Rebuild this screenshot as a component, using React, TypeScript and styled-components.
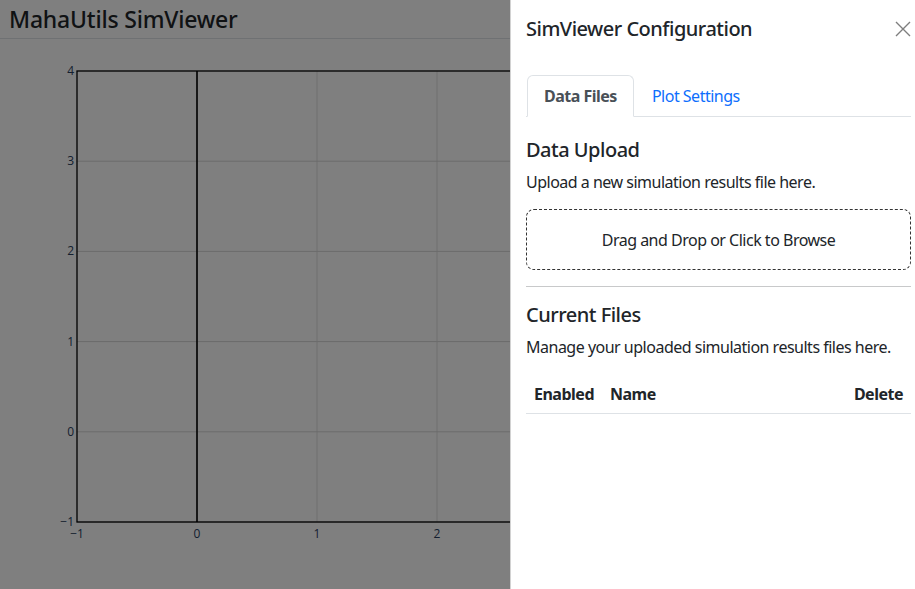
import * as React from 'react';
import styled, { createGlobalStyle } from 'styled-components';

const GlobalStyle = createGlobalStyle`
  html, body {
    margin: 0;
    padding: 0;
    background: #fff;
    overflow: hidden;
  }
  body {
    font-family: "Noto Sans", "Open Sans", sans-serif;
    font-size: 16px;
    line-height: 1.5;
    color: #212529;
  }
  * { box-sizing: border-box; }
`;

const Page = styled.div`
  display: flex;
  flex-direction: column;
  width: 915px;
  height: 589px;
`;

const PageHeader = styled.div`
  padding: 5px 9px 5px;
  border-bottom: 1px solid #dee2e6;
  font-size: 23px;
  font-weight: 500;
  line-height: 28px;
  letter-spacing: -0.2px;
`;

const PlotArea = styled.div`
  flex: 1;
`;

const Backdrop = styled.div`
  position: fixed;
  inset: 0;
  background: rgba(0, 0, 0, 0.5);
`;

const Panel = styled.aside`
  position: fixed;
  top: 0;
  right: 0;
  bottom: 0;
  width: 405px;
  background: #fff;
  border-left: 1px solid rgba(0, 0, 0, 0.175);
  display: flex;
  flex-direction: column;
  letter-spacing: -0.5px;
`;

const PanelHeader = styled.div`
  display: flex;
  align-items: center;
  justify-content: space-between;
  padding: 17px 4px 16px 15px;
`;

const PanelTitle = styled.h5`
  margin: 0;
  font-size: 20px;
  font-weight: 500;
  line-height: 24px;
`;

const CloseButton = styled.button`
  width: 16px;
  height: 16px;
  padding: 0;
  border: 0;
  background: transparent;
  opacity: 0.5;
  display: flex;
  cursor: pointer;
`;

const PanelBody = styled.div`
  padding: 18px 4px 16px 15px;
  flex: 1;
`;

const TabList = styled.div`
  display: flex;
  border-bottom: 1px solid #dee2e6;
`;

const Tab = styled.button<{ $active?: boolean }>`
  font: inherit;
  letter-spacing: inherit;
  margin: 0 0 -1px 1px;
  padding: 8px 16px;
  line-height: 24px;
  background: ${p => (p.$active ? '#fff' : 'transparent')};
  border: 1px solid transparent;
  border-color: ${p => (p.$active ? '#dee2e6 #dee2e6 #fff' : 'transparent')};
  border-radius: 6px 6px 0 0;
  color: ${p => (p.$active ? '#495057' : '#0d6efd')};
  font-weight: ${p => (p.$active ? 700 : 400)};
  cursor: pointer;
`;

const SectionTitle = styled.h5<{ $gap: number }>`
  margin: ${p => p.$gap}px 0 8px;
  font-size: 20px;
  font-weight: 500;
  line-height: 24px;
`;

const Lead = styled.p`
  margin: 0 0 15px;
`;

const DropZone = styled.div`
  height: 61px;
  border: 1px dashed #333;
  border-radius: 8px;
  display: flex;
  align-items: center;
  justify-content: center;
  cursor: pointer;
`;

const Rule = styled.hr`
  margin: 16px 0 0;
  border: 0;
  border-top: 1px solid #c8c9ca;
`;

const Table = styled.div`
  display: grid;
  grid-template-columns: auto 1fr auto;
  border-bottom: 1px solid #dee2e6;
`;

const HeadCell = styled.div<{ $align?: string }>`
  padding: 8px 8px 7px;
  font-weight: 700;
  text-align: ${p => p.$align || 'left'};
`;

const plotLeft = 77;
const plotTop = 32;
const unitX = 120;
const unitY = 90.2;

function Plot() {
  const xs = [-1, 0, 1, 2, 3];
  const ys = [4, 3, 2, 1, 0, -1];
  const xPos = (v: number) => plotLeft + (v + 1) * unitX;
  const yPos = (v: number) => plotTop + (4 - v) * unitY;
  const right = xPos(6);
  const bottom = yPos(-1);
  const label = (v: number) => (v < 0 ? `\u2212${-v}` : `${v}`);
  const font = "'Open Sans', Verdana, sans-serif";
  return (
    <svg width="915" height="550" style={{ display: 'block' }}>
      {[0, 1, 2, 3, 4, 5].map(v => (
        <line key={'gx' + v} x1={xPos(v)} x2={xPos(v)} y1={plotTop} y2={bottom} stroke="#dedede" strokeWidth={1} />
      ))}
      {ys.slice(1).map(v => (
        <line key={'gy' + v} x1={plotLeft} x2={right} y1={yPos(v)} y2={yPos(v)} stroke="#d6d6d6" strokeWidth={1} />
      ))}
      <line x1={xPos(0)} x2={xPos(0)} y1={plotTop} y2={bottom} stroke="#000" strokeWidth={1.6} />
      <rect x={plotLeft} y={plotTop} width={right - plotLeft} height={bottom - plotTop} fill="none" stroke="#000" strokeWidth={1.3} />
      {ys.map(v => (
        <text key={'ty' + v} x={plotLeft - 3} y={yPos(v) + 4} textAnchor="end" fontSize="12" fill="#2a3f5f" fontFamily={font}>
          {label(v)}
        </text>
      ))}
      {xs.map(v => (
        <text key={'tx' + v} x={xPos(v)} y={bottom + 16} textAnchor="middle" fontSize="12" fill="#2a3f5f" fontFamily={font}>
          {label(v)}
        </text>
      ))}
    </svg>
  );
}

function CloseIcon() {
  return (
    <svg width="16" height="16" viewBox="0 0 16 16">
      <path d="M1 1 L15 15 M15 1 L1 15" stroke="#000" strokeWidth="1.4" fill="none" />
    </svg>
  );
}

export default function App() {
  return (
    <>
      <GlobalStyle />
      <Page>
        <PageHeader>MahaUtils SimViewer</PageHeader>
        <PlotArea>
          <Plot />
        </PlotArea>
      </Page>
      <Backdrop />
      <Panel>
        <PanelHeader>
          <PanelTitle>SimViewer Configuration</PanelTitle>
          <CloseButton aria-label="Close">
            <CloseIcon />
          </CloseButton>
        </PanelHeader>
        <PanelBody>
          <TabList>
            <Tab $active>Data Files</Tab>
            <Tab>Plot Settings</Tab>
          </TabList>
          <SectionTitle $gap={21}>Data Upload</SectionTitle>
          <Lead>Upload a new simulation results file here.</Lead>
          <DropZone>Drag and Drop or Click to Browse</DropZone>
          <Rule />
          <SectionTitle $gap={16}>Current Files</SectionTitle>
          <Lead>Manage your uploaded simulation results files here.</Lead>
          <Table>
            <HeadCell>Enabled</HeadCell>
            <HeadCell>Name</HeadCell>
            <HeadCell $align="right">Delete</HeadCell>
          </Table>
        </PanelBody>
      </Panel>
    </>
  );
}
